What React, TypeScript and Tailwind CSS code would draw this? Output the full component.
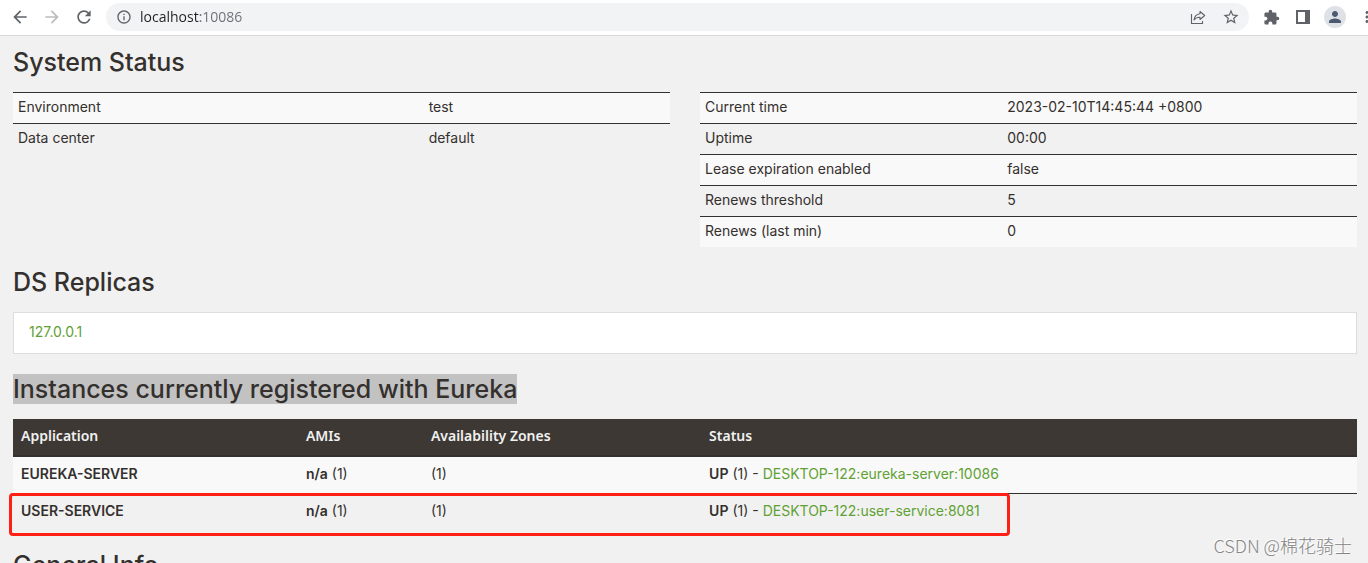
import React, { useState } from "react";
import {
  MdArrowBack,
  MdArrowForward,
  MdRefresh,
  MdInfoOutline,
  MdStarBorder,
  MdExtension,
  MdPerson,
  MdMoreVert
} from "react-icons/md";

interface StatusRow {
  label: string;
  value: string;
}

interface Instance {
  app: string;
  amis: string;
  zones: string;
  count: number;
  link: string;
}

const environment: StatusRow[] = [
  { label: "Environment", value: "test" },
  { label: "Data center", value: "default" }
];

const runtime: StatusRow[] = [
  { label: "Current time", value: "2023-02-10T14:45:44 +0800" },
  { label: "Uptime", value: "00:00" },
  { label: "Lease expiration enabled", value: "false" },
  { label: "Renews threshold", value: "5" },
  { label: "Renews (last min)", value: "0" }
];

const instances: Instance[] = [
  { app: "EUREKA-SERVER", amis: "(1)", zones: "(1)", count: 1, link: "DESKTOP-122:eureka-server:10086" },
  { app: "USER-SERVICE", amis: "(1)", zones: "(1)", count: 1, link: "DESKTOP-122:user-service:8081" }
];

function ShareIcon() {
  return (
    <svg width="16" height="16" viewBox="0 0 16 16" fill="none" stroke="#5f6368" strokeWidth="1.1">
      <path d="M1.5 5v9.500h11V12" />
      <path d="M10 2.500l4.700 4L10 10.500V8.300C7.500 8.200 5.500 9 4 11c.4-3.400 2.500-5.900 6-6.300z" strokeLinejoin="round" />
    </svg>
  );
}

function SidePanelIcon() {
  return (
    <svg width="14" height="14" viewBox="0 0 14 14">
      <path d="M0 0h14v14H0zM2 2v10h7V2z" fill="#5f6368" fillRule="evenodd" />
    </svg>
  );
}

function BrowserBar() {
  const [url, setUrl] = useState("localhost:10086");

  return (
    <header className="flex h-9 shrink-0 items-center overflow-hidden border-b border-[#d9dadc] bg-white pb-px pl-[10px] text-[#5f6368]">
      <button aria-label="Back" className="mr-3 shrink-0">
        <MdArrowBack size={20} />
      </button>
      <button aria-label="Forward" className="mr-3 shrink-0 text-[#babcbe]">
        <MdArrowForward size={20} />
      </button>
      <button aria-label="Reload" className="mr-3 shrink-0">
        <MdRefresh size={20} />
      </button>
      <div className="flex h-7 min-w-0 flex-1 items-center rounded-full bg-[#f1f3f4] pr-[9px] pl-[10px]">
        <MdInfoOutline size={16} className="mr-2 shrink-0" />
        <input
          aria-label="Address"
          value={url}
          onChange={(e) => setUrl(e.target.value)}
          className="min-w-0 flex-1 bg-[linear-gradient(to_right,#202124_60px,#6b7075_60px)] bg-clip-text font-['Open_Sans',sans-serif] text-sm text-transparent outline-none"
        />
        <button aria-label="Share" className="mr-4 shrink-0">
          <ShareIcon />
        </button>
        <button aria-label="Bookmark" className="shrink-0">
          <MdStarBorder size={18} />
        </button>
      </div>
      <div className="flex shrink-0 items-center pl-[14px]">
        <button aria-label="Extensions" className="mr-4">
          <MdExtension size={17} />
        </button>
        <button aria-label="Side panel" className="mr-[14px]">
          <SidePanelIcon />
        </button>
        <button
          aria-label="Profile"
          className="mr-3 flex size-[22px] items-center justify-center rounded-full bg-[#dee1e6] text-[#4c5a70]"
        >
          <MdPerson size={18} />
        </button>
        <button aria-label="Menu" className="-mr-2">
          <MdMoreVert size={18} />
        </button>
      </div>
    </header>
  );
}

function Heading({ children }: { children: React.ReactNode }) {
  return (
    <h1 className="mb-[15px] font-['Inter',sans-serif] text-[25px] leading-[30px] font-medium whitespace-nowrap">
      {children}
    </h1>
  );
}

function StatusTable({ rows, labelWidth }: { rows: StatusRow[]; labelWidth: string }) {
  return (
    <table className="w-full table-fixed self-start">
      <tbody>
        {rows.map((row) => (
          <tr key={row.label} className="border-t border-[#34302d] odd:bg-[#f9f9f9]">
            <th scope="row" className={`px-[5px] pt-1 pb-[6px] text-left font-normal ${labelWidth}`}>
              {row.label}
            </th>
            <td className="px-[5px] pt-1 pb-[6px]">{row.value}</td>
          </tr>
        ))}
      </tbody>
    </table>
  );
}

export default function App() {
  return (
    <div className="flex h-screen flex-col overflow-hidden bg-[#f1f1f1] font-['Inter',sans-serif] text-sm leading-5 text-[#34302d]">
      <BrowserBar />

      <main className="min-h-0 flex-1 overflow-hidden pt-[11px] pr-[11px] pl-[13px]">
        <Heading>System Status</Heading>
        <div className="mb-5 grid grid-cols-2 gap-[30px]">
          <StatusTable rows={environment} labelWidth="w-[62.5%]" />
          <StatusTable rows={runtime} labelWidth="w-[46%]" />
        </div>

        <Heading>DS Replicas</Heading>
        <ul className="mb-5 border border-[#dddddd] bg-white">
          <li className="px-[15px] pt-[9px] pb-[11px]">
            <a href="#replica" className="text-[#5fa134]">127.0.0.1</a>
          </li>
        </ul>

        <Heading>
          <span className="inline-block bg-[#c2c2c2]">Instances currently registered with Eureka</span>
        </Heading>
        <div className="relative mb-5">
          <table className="w-full table-fixed">
            <thead>
              <tr className="border-b-2 border-[#34302d] bg-[#3d3833] text-left font-['Noto_Sans',sans-serif] text-[#f1f1f1]">
                <th className="w-[21.2%] px-2 pt-[7px] pb-[9px] font-semibold">Application</th>
                <th className="w-[9.3%] px-2 pt-[7px] pb-[9px] font-semibold">AMIs</th>
                <th className="w-[20.7%] px-2 pt-[7px] pb-[9px] font-semibold">Availability Zones</th>
                <th className="px-2 pt-[7px] pb-[9px] font-semibold">Status</th>
              </tr>
            </thead>
            <tbody>
              {instances.map((item) => (
                <tr key={item.app} className="border-[#34302d] odd:bg-[#f9f9f9] even:border-t">
                  <td className="px-2 pt-[7px] pb-[9px] font-semibold">{item.app}</td>
                  <td className="px-2 pt-[7px] pb-[9px]">
                    <b className="font-semibold">n/a</b> {item.amis}
                  </td>
                  <td className="px-2 pt-[7px] pb-[9px]">{item.zones}</td>
                  <td className="px-2 pt-[7px] pb-[9px] whitespace-nowrap">
                    <b className="font-semibold">UP</b> ({item.count}) -{" "}
                    <a href="#instance" className="text-[#5fa134]">{item.link}</a>
                  </td>
                </tr>
              ))}
            </tbody>
          </table>
          {/* marks the newly registered service */}
          <div className="pointer-events-none absolute -bottom-[6px] -left-1 h-[43px] w-[1001px] rounded-[4px] border-3 border-[#ff2015]" />
        </div>

        <Heading>General Info</Heading>
      </main>

      <p className="absolute right-4 bottom-1 font-['Noto_Sans_CJK_SC',sans-serif] text-lg leading-7 font-light text-[#858585] [text-shadow:-1px_-1px_0_#ffffff]">
        CSDN @棉花骑士
      </p>
    </div>
  );
}
